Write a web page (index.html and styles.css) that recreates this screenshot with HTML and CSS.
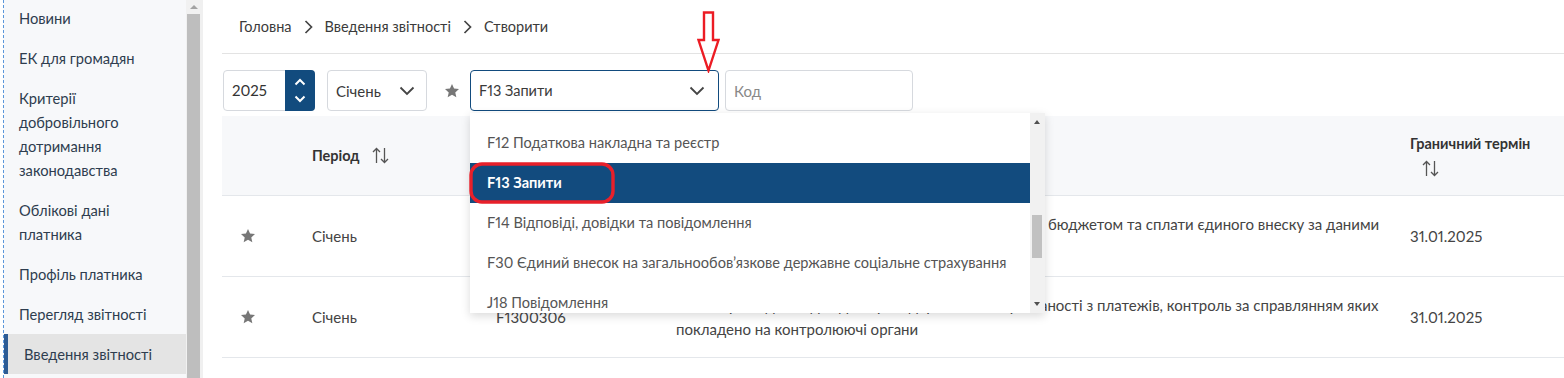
FILE: index.html
```html
<!DOCTYPE html>
<html lang="uk">
<head>
    <meta charset="UTF-8">
    <meta name="viewport" content="width=device-width, initial-scale=1.0">
    <title>Введення звітності</title>
    <link rel="stylesheet" href="styles.css">
</head>
<body>
    <div class="layout">
        <aside class="sidebar">
            <nav class="side-nav">
                <a class="side-link" href="#">Новини</a>
                <a class="side-link" href="#">ЕК для громадян</a>
                <a class="side-link" href="#">Критерії добровільного дотримання законодавства</a>
                <a class="side-link" href="#">Облікові дані платника</a>
                <a class="side-link" href="#">Профіль платника</a>
                <a class="side-link" href="#">Перегляд звітності</a>
                <a class="side-link active" href="#">Введення звітності</a>
            </nav>
        </aside>
        <div class="page-scroll">
            <span class="scroll-up"></span>
            <span class="scroll-thumb"></span>
        </div>

        <main class="content">
            <div class="breadcrumbs">
                <a href="#">Головна</a>
                <svg class="crumb-sep" width="9" height="14" viewBox="0 0 9 14"><path d="M1.5 1 L7.5 7 L1.5 13" fill="none" stroke="#444" stroke-width="1.7"/></svg>
                <a href="#">Введення звітності</a>
                <svg class="crumb-sep" width="9" height="14" viewBox="0 0 9 14"><path d="M1.5 1 L7.5 7 L1.5 13" fill="none" stroke="#444" stroke-width="1.7"/></svg>
                <span>Створити</span>
            </div>

            <div class="filters">
                <div class="year-box">
                    <span class="year-value">2025</span>
                    <div class="year-spin">
                        <svg width="12" height="8" viewBox="0 0 12 8"><path d="M1.5 6.5 L6 2 L10.5 6.5" fill="none" stroke="#fff" stroke-width="2"/></svg>
                        <svg width="12" height="8" viewBox="0 0 12 8"><path d="M1.5 1.5 L6 6 L10.5 1.5" fill="none" stroke="#fff" stroke-width="2"/></svg>
                    </div>
                </div>

                <div class="select month-select">
                    <span>Січень</span>
                    <svg class="chevron" width="16" height="10" viewBox="0 0 16 10"><path d="M1.5 1.5 L8 8 L14.5 1.5" fill="none" stroke="#444" stroke-width="1.8"/></svg>
                </div>

                <svg class="fav-star" width="16" height="16" viewBox="0 0 24 24"><path d="M12 1.5 L15.1 8.3 L22.5 9.1 L16.9 14.1 L18.5 21.5 L12 17.7 L5.5 21.5 L7.1 14.1 L1.5 9.1 L8.9 8.3 Z" fill="#777"/></svg>

                <div class="form-select-wrap">
                    <div class="select form-select">
                        <span>F13 Запити</span>
                        <svg class="chevron" width="16" height="10" viewBox="0 0 16 10"><path d="M1.5 1.5 L8 8 L14.5 1.5" fill="none" stroke="#444" stroke-width="1.8"/></svg>
                    </div>

                    <div class="dropdown">
                        <ul class="dropdown-list">
                            <li>F11 Звіти суб'єктів господарювання</li>
                            <li>F12 Податкова накладна та реєстр</li>
                            <li class="selected">F13 Запити</li>
                            <li>F14 Відповіді, довідки та повідомлення</li>
                            <li>F30 Єдиний внесок на загальнообов’язкове державне соціальне страхування</li>
                            <li>J18 Повідомлення</li>
                        </ul>
                        <div class="dropdown-scroll">
                            <span class="tri-up"></span>
                            <span class="dd-thumb"></span>
                            <span class="tri-down"></span>
                        </div>
                    </div>

                    <!-- позначки поверх форми -->
                    <svg class="mark-arrow" width="24" height="62" viewBox="0 0 24 62"><path d="M7 1.5 H16 V29 H21.5 L11.5 59.5 L1.5 29 H7 Z" fill="none" stroke="#ec1c24" stroke-width="2.4"/></svg>
                    <svg class="mark-frame" width="146" height="42" viewBox="0 0 146 42"><rect x="2" y="2" width="142" height="38" rx="11" fill="none" stroke="#e8202a" stroke-width="3.4"/></svg>
                </div>

                <input class="code-input" type="text" placeholder="Код">
            </div>

            <div class="reports">
                <div class="reports-row reports-head">
                    <div class="cell cell-fav"></div>
                    <div class="cell">Період<svg class="sort" width="17" height="17" viewBox="0 0 17 17"><path d="M4.5 16 V1.5 M1 5 L4.5 1.5 L8 5 M12.5 1 V15.5 M9 12 L12.5 15.5 L16 12" fill="none" stroke="#555" stroke-width="1.3"/></svg></div>
                    <div class="cell">Код</div>
                    <div class="cell cell-name">Назва</div>
                    <div class="cell">Граничний термін<svg class="sort" width="17" height="17" viewBox="0 0 17 17"><path d="M4.5 16 V1.5 M1 5 L4.5 1.5 L8 5 M12.5 1 V15.5 M9 12 L12.5 15.5 L16 12" fill="none" stroke="#555" stroke-width="1.3"/></svg></div>
                </div>
                <div class="reports-row">
                    <div class="cell cell-fav"><svg class="row-star" width="16" height="16" viewBox="0 0 24 24"><path d="M12 1.5 L15.1 8.3 L22.5 9.1 L16.9 14.1 L18.5 21.5 L12 17.7 L5.5 21.5 L7.1 14.1 L1.5 9.1 L8.9 8.3 Z" fill="#777"/></svg></div>
                    <div class="cell">Січень</div>
                    <div class="cell">F1300106</div>
                    <div class="cell cell-name">Запит про надання інформації про стан розрахунків з бюджетом та сплати єдиного внеску за даними контролюючих органів</div>
                    <div class="cell">31.01.2025</div>
                </div>
                <div class="reports-row">
                    <div class="cell cell-fav"><svg class="row-star" width="16" height="16" viewBox="0 0 24 24"><path d="M12 1.5 L15.1 8.3 L22.5 9.1 L16.9 14.1 L18.5 21.5 L12 17.7 L5.5 21.5 L7.1 14.1 L1.5 9.1 L8.9 8.3 Z" fill="#777"/></svg></div>
                    <div class="cell">Січень</div>
                    <div class="cell">F1300306</div>
                    <div class="cell cell-name">Запит про надання довідки про відсутність заборгованості з платежів, контроль за справлянням яких покладено на контролюючі органи</div>
                    <div class="cell">31.01.2025</div>
                </div>
            </div>
        </main>
    </div>
</body>
</html>
```

FILE: styles.css
```css
body {
    margin: 0;
    font-family: Lato, "Noto Sans", "Liberation Sans", sans-serif;
    font-variant-numeric: proportional-nums;
    color: #444;
    background-color: #fff;
    overflow: hidden;
}
.layout {
    display: flex;
    height: 378px;
    padding-left: 3px;
}

/* ліве меню */
.sidebar {
    width: 182px;
    flex-shrink: 0;
    background-color: #f7f8fa;
    border-left: 1px dashed #5a96da;
    overflow: hidden;
}
.side-nav {
    margin-top: -2px;
}
.side-link {
    display: block;
    padding: 8px 10px 8px 15px;
    line-height: 24px;
    font-size: 14.7px;
    color: #2e3d4f;
    text-decoration: none;
}
.side-link.active {
    background-color: #e4e4e4;
    border-left: 4px solid #2d5b94;
    padding-left: 16px;
}
.page-scroll {
    position: relative;
    width: 14px;
    flex-shrink: 0;
    background-color: #f1f1f1;
    border-right: 3px solid #f0f0f0;
}
.scroll-up {
    position: absolute;
    top: 5px;
    left: 4px;
    border-left: 4px solid transparent;
    border-right: 4px solid transparent;
    border-bottom: 4px solid #a3a3a3;
}
.scroll-thumb {
    position: absolute;
    top: 14px;
    bottom: 0;
    left: 1px;
    right: 0;
    background-color: #bebebe;
}

/* основна частина */
.content {
    flex: 1;
    min-width: 0;
    padding-left: 19px;
}
.breadcrumbs {
    display: flex;
    align-items: center;
    gap: 13px;
    height: 53px;
    padding-left: 17px;
    border-bottom: 1px solid #e3e3e3;
    font-size: 14.5px;
}
.breadcrumbs a,
.breadcrumbs span {
    color: #3b3b3b;
    text-decoration: none;
}
.crumb-sep {
    margin: 0 -1px;
}

.filters {
    display: flex;
    align-items: center;
    height: 41px;
    margin-top: 16px;
    padding-left: 1px;
}
.year-box {
    display: flex;
    width: 92px;
    height: 41px;
    box-sizing: border-box;
    border: 1px solid #d6d9de;
    border-radius: 4px;
}
.year-value {
    flex: 1;
    padding-left: 8px;
    line-height: 39px;
    font-size: 15px;
    color: #333;
}
.year-spin {
    width: 30px;
    margin: -1px -1px -1px 0;
    background-color: #124b7e;
    border-radius: 0 4px 4px 0;
    display: flex;
    flex-direction: column;
    align-items: center;
    justify-content: center;
    gap: 9px;
}
.select {
    display: flex;
    align-items: center;
    justify-content: space-between;
    height: 41px;
    box-sizing: border-box;
    border: 1px solid #d6d9de;
    border-radius: 4px;
    padding: 0 11px 0 8px;
    font-size: 15px;
    color: #3a3a3a;
    background-color: #fff;
}
.month-select {
    width: 100px;
    margin-left: 12px;
}
.fav-star {
    margin: 0 10px 0 17px;
}
.form-select-wrap {
    position: relative;
}
.form-select {
    width: 249px;
    border-color: #124b7e;
    padding-right: 13px;
    font-size: 14.5px;
}
.code-input {
    width: 188px;
    height: 41px;
    box-sizing: border-box;
    margin-left: 6px;
    border: 1px solid #d6d9de;
    border-radius: 4px;
    padding: 0 8px;
    font-family: inherit;
    font-size: 15px;
}
.code-input::placeholder {
    color: #888;
}

/* випадаючий список форм */
.dropdown {
    position: absolute;
    top: 43px;
    left: 0;
    z-index: 5;
    display: flex;
    width: 575px;
    height: 200px;
    background-color: #fff;
    box-shadow: 0 3px 9px rgba(0, 0, 0, 0.15);
    overflow: hidden;
}
.dropdown-list {
    flex: 1;
    list-style: none;
    margin: -30px 0 0;
    padding: 0;
}
.dropdown-list li {
    height: 40px;
    line-height: 40px;
    padding-left: 17px;
    font-size: 14.6px;
    color: #555;
    white-space: nowrap;
}
.dropdown-list li.selected {
    background-color: #124b7e;
    color: #fff;
    font-weight: bold;
}
.dropdown-scroll {
    position: relative;
    width: 15px;
    background-color: #f1f1f1;
}
.tri-up,
.tri-down {
    position: absolute;
    left: 4px;
    border-left: 3.5px solid transparent;
    border-right: 3.5px solid transparent;
}
.tri-up {
    top: 7px;
    border-bottom: 4px solid #505050;
}
.tri-down {
    bottom: 7px;
    border-top: 4px solid #505050;
}
.dd-thumb {
    position: absolute;
    top: 102px;
    left: 2px;
    width: 10px;
    height: 43px;
    background-color: #c1c1c1;
}
.mark-arrow {
    position: absolute;
    top: -59px;
    left: 227px;
    z-index: 6;
}
.mark-frame {
    position: absolute;
    top: 92px;
    left: -1px;
    z-index: 6;
}

/* таблиця звітів */
.reports {
    margin-top: 5px;
    font-size: 15px;
}
.reports-row {
    display: grid;
    grid-template-columns: 68px 184px 180px 734px 176px;
    align-items: center;
    height: 80px;
    border-bottom: 1px solid #e4e7eb;
    color: #444;
    line-height: 24px;
}
.reports-head {
    height: 79px;
    background-color: #f7f8fa;
    color: #333;
    font-size: 14.5px;
    font-weight: bold;
    line-height: 25px;
}
.cell {
    padding: 0 22px;
}
.cell-fav {
    padding: 0 0 0 18px;
}
.cell-name {
    padding-right: 8px;
}
.sort {
    vertical-align: -3px;
    margin-left: 12px;
}
.row-star {
    display: block;
}
```
